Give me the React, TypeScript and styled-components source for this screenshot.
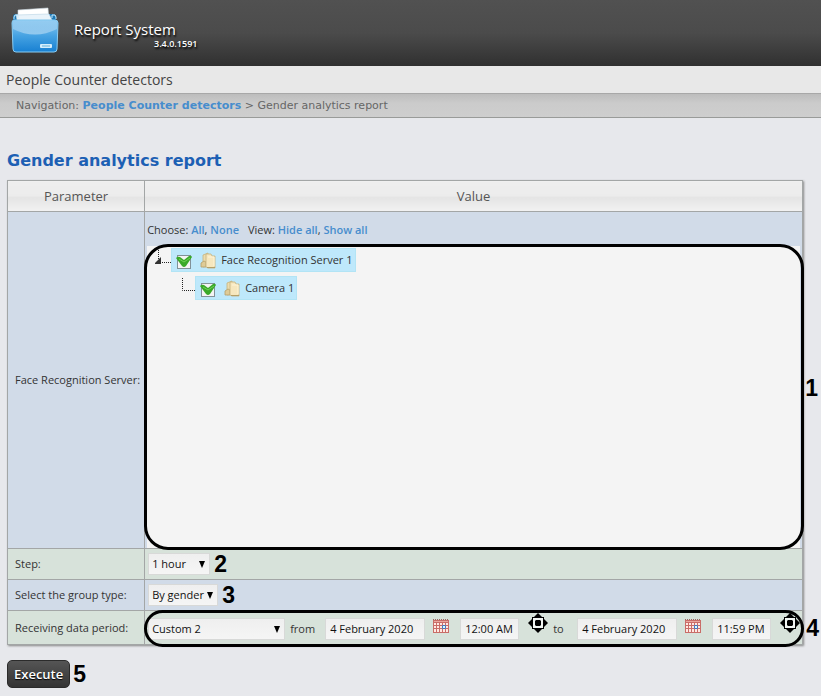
import React, { useState } from "react";
import styled, { createGlobalStyle, css } from "styled-components";

const GlobalStyle = createGlobalStyle`
  * { box-sizing: border-box; }
  body {
    margin: 0;
    background: #e7e8ec;
    color: #333;
    font-family: "Open Sans", "Noto Sans", sans-serif;
    font-size: 11px;
    line-height: 16px;
  }
`;

const Header = styled.header`
  display: flex;
  height: 66px;
  padding: 6px 10px;
  gap: 14px;
  color: #fff;
  background: linear-gradient(#515151, #4b4b4b 50%, #303030);
  text-shadow: 1px 2px 2px #000;
`;

const Brand = styled.div`
  display: flex;
  flex-direction: column;
  padding-top: 14px;
`;

const BrandName = styled.span`
  font-size: 15px;
  line-height: 18px;
`;

const Version = styled.span`
  padding-left: 80px;
  font-size: 9px;
  line-height: 12px;
  font-weight: 600;
`;

const SectionBar = styled.div`
  height: 27px;
  padding: 0 6px;
  background: #e8e8e8;
  color: #444;
  font-size: 14px;
  line-height: 28px;
`;

const Breadcrumb = styled.nav`
  height: 25px;
  padding: 0 16px;
  border-top: 1px solid #a8a8a8;
  border-bottom: 1px solid #999b99;
  background: linear-gradient(#bdbdbd, #cbcbcb 40%, #cecece);
  color: #666;
  font-family: "DejaVu Sans", sans-serif;
  font-size: 11px;
  line-height: 24px;
  white-space: pre;
`;

const Link = styled.a`
  color: #478dcd;
  font-weight: 600;
  text-decoration: none;
`;

const Main = styled.main`
  padding: 32px 18px 8px 7px;
`;

const Title = styled.h1`
  margin: 0 0 8px;
  color: #1d60b4;
  font-family: "DejaVu Sans", sans-serif;
  font-size: 16px;
  line-height: 22px;
`;

const ReportTable = styled.table`
  width: 100%;
  border-collapse: collapse;
  box-shadow: 1px 1px 2px #888;
`;

const HeadCell = styled.th`
  height: 31px;
  padding: 0;
  border: 1px solid #a3a6a6;
  background: linear-gradient(#eee, #ececec 50%, #e4e4e4 52%, #f2f2f2);
  color: #555;
  font-size: 13px;
  font-weight: 400;
`;

const Row = styled.tr<{ $green?: boolean }>`
  background: ${(p) => (p.$green ? "#d7e2da" : "#d1dbe8")};
`;

const LabelCell = styled.th`
  padding: 0 4px 0 7px;
  border: 1px solid #a3a6a6;
  font-weight: 400;
  text-align: left;
  white-space: nowrap;
`;

const ValueCell = styled.td<{ $height: number }>`
  position: relative;
  width: 100%;
  height: ${(p) => p.$height}px;
  padding: 0 2px;
  border: 1px solid #a3a6a6;
`;

const Chooser = styled.div`
  display: flex;
  height: 34px;
  padding-top: 10px;
  gap: 9px;
`;

const TreePanel = styled.div`
  position: relative;
  display: flex;
  flex-direction: column;
  gap: 4px;
  height: 302px;
  padding: 2px 8px;
  background: #f4f4f4;
`;

const TreeRow = styled.div<{ $level: number }>`
  display: flex;
  height: 24px;
  padding-left: ${(p) => p.$level * 24}px;
`;

const TreeLabel = styled.label`
  display: flex;
  align-items: center;
  padding: 0 2px 0 5px;
  gap: 5px;
  border: 1px solid #b2e4f5;
  background: #bee8fb;
`;

const CheckWrap = styled.span`
  position: relative;
  display: flex;
  margin-right: 4px;
  padding-top: 3px;
`;

const Check = styled.input`
  appearance: none;
  width: 14px;
  height: 14px;
  margin: 0;
  border: 1px solid #829198;
  background: #f4f4f4;
  & + svg { display: none; }
  &:checked + svg { display: block; }
`;

const Tick = styled.svg`
  position: absolute;
  left: 0;
  top: 3px;
  overflow: visible;
  pointer-events: none;
`;

const field = css`
  height: 22px;
  border: 1px solid #d8d9d8;
  border-radius: 0;
  background: linear-gradient(#efefef, #f5f5f5);
  color: #111;
  font: inherit;
`;

const SelectWrap = styled.span`
  position: relative;
  display: inline-flex;
`;

const SelectBox = styled.select<{ $width: number }>`
  ${field}
  appearance: none;
  width: ${(p) => p.$width}px;
  padding: 0 3px;
`;

const SelectArrow = styled.svg`
  position: absolute;
  right: 5px;
  top: 8px;
  pointer-events: none;
`;

const TextField = styled.input<{ $width: number }>`
  ${field}
  width: ${(p) => p.$width}px;
  padding: 0 4px;
`;

const ControlLine = styled.div`
  display: flex;
  align-items: center;
  gap: 4px;
  padding: 0 1px;
`;

const Period = styled.div`
  display: flex;
  align-items: center;
  height: 32px;
  padding: 2px 0 0 1px;
`;

const Word = styled.span<{ $width: number }>`
  flex: none;
  width: ${(p) => p.$width}px;
  padding-left: 5px;
`;

const IconButton = styled.button`
  display: flex;
  height: 22px;
  padding: 0 11px 0 8px;
  border: 0;
  background: none;
`;

const MoveHandle = styled.button`
  display: flex;
  height: 32px;
  padding: 0 0 0 9px;
  border: 0;
  background: none;
`;

const Ring = styled.div<{ $radius: number }>`
  position: absolute;
  inset: -2px -4px -2px -3px;
  border: 3px solid #000;
  border-radius: ${(p) => p.$radius}px;
  pointer-events: none;
`;

const PeriodRing = styled(Ring)`
  inset: -1px -2px -3px -1px;
`;

const Callout = styled.span`
  color: #000;
  font-family: "Liberation Sans", sans-serif;
  font-size: 23px;
  font-weight: 700;
  line-height: 24px;
`;

const SideCallout = styled(Callout)<{ $top: string }>`
  position: absolute;
  left: 100%;
  top: ${(p) => p.$top};
  padding-left: 5px;
`;

const PeriodCallout = styled(SideCallout)`
  padding-left: 4px;
`;

const Actions = styled.div`
  display: flex;
  align-items: center;
  gap: 3px;
  padding-top: 15px;
`;

const Execute = styled.button`
  height: 28px;
  padding: 0 6px;
  border: 1px solid #2b2b2b;
  border-radius: 5px;
  background: linear-gradient(#555, #343434);
  color: #fff;
  font: 600 13px/16px "Open Sans", sans-serif;
  text-shadow: 0 1px 1px #000;
`;

function AppLogo() {
  return (
    <svg width="50" height="48" viewBox="0 0 50 48" aria-hidden="true">
      <defs>
        <linearGradient id="case" x1="0" y1="0" x2="0" y2="1">
          <stop offset="0" stopColor="#8cc8f0" />
          <stop offset=".5" stopColor="#45a2e2" />
          <stop offset="1" stopColor="#1880d2" />
        </linearGradient>
        <linearGradient id="shine" x1="0" y1="0" x2="0" y2="1">
          <stop offset="0" stopColor="#fff" stopOpacity=".1" />
          <stop offset="1" stopColor="#fff" stopOpacity=".4" />
        </linearGradient>
      </defs>
      <path d="M3 15v-4q0-3 3-3h37q3 0 3 3v4z" fill="#1b77b4" />
      <path d="m8 4 30-2 1 13H8z" fill="#fff" stroke="#cad6df" strokeWidth=".6" />
      <path d="m6 9 33-1 3 6H7z" fill="#e9f3fa" stroke="#b9d3e4" strokeWidth=".6" />
      <path d="M4 13V11q0-3 4-2v3M46 13V11q0-3-4-2v3" fill="none" stroke="#c8edff" />
      <path d="M4 14h41q3 0 3 3l-1 26q0 3-3 3H6q-3 0-3-3L2 17q0-3 2-3z" fill="url(#case)" stroke="#8bcdf2" />
      <path d="M3 15h43q1 0 1 2v6Q25 34 3 23z" fill="url(#shine)" />
      <rect x="30" y="38" width="12" height="4" rx="1" fill="#d3edfc" />
      <path d="M32 40h8" stroke="#63afd9" />
    </svg>
  );
}

function FolderIcon() {
  return (
    <svg width="16" height="18" viewBox="0 0 16 18" aria-hidden="true">
      <path d="M3 16V4l5-2v13z" fill="#ecdcae" stroke="#c5b27e" strokeWidth=".8" />
      <path d="M1 16v-4l3-2 2 1v5z" fill="#dfcb96" stroke="#b5a069" strokeWidth=".8" />
      <path d="M6 16V3h5l1 2h3v12H8z" fill="#f6e7be" stroke="#c5b27e" strokeWidth=".8" />
      <path d="M8 6h6v9" fill="none" stroke="#fff4d6" />
      <path d="M7 16.500h8" stroke="#b5a069" />
    </svg>
  );
}

function CalendarIcon() {
  return (
    <svg width="16" height="16" viewBox="0 0 16 16" aria-hidden="true">
      <path d="M0 2h16v13H0z" fill="#c96d68" />
      <path d="M1 5h2v2H1zm3 0h2v2H4zm3 0h2v2H7zm3 0h2v2h-2zm3 0h2v2h-2zM1 8h2v2H1zm3 0h2v2H4zm3 0h2v2H7zm3 0h2v2h-2zm3 0h2v2h-2zM1 11h2v3H1zm3 0h2v3H4zm3 0h2v3H7zm3 0h2v3h-2zm3 0h2v3h-2z" fill="#ffe9e3" />
      <path d="M0 1.500h16" stroke="#9c6560" strokeDasharray="1 1" />
      <path d="M1 3.500h14" stroke="#eba69d" />
      <path d="M9.500 7.500h3v3h-3z" fill="#dff" stroke="#4677bd" />
    </svg>
  );
}

function MoveIcon() {
  return (
    <svg width="20" height="20" viewBox="0 0 20 20" aria-hidden="true">
      <path d="m10 0 10 10-10 10L0 10z" fill="#000" />
      <path d="M4 4h12v12H4z" fill="#000" />
      <path d="M5 5h10v10H5z" fill="#f1f5f2" />
      <path d="M8 7h4l1 1v4l-1 1H8l-1-1V8z" fill="#000" />
    </svg>
  );
}

function Select({ id, width, value, options }: {
  id: string; width: number; value: string; options: string[];
}) {
  return (
    <SelectWrap>
      <SelectBox id={id} $width={width} defaultValue={value}>
        {options.map((o) => <option key={o}>{o}</option>)}
      </SelectBox>
      <SelectArrow width="6" height="7" viewBox="0 0 6 7">
        <path d="M0 0h6L3 7z" fill="#000" />
      </SelectArrow>
    </SelectWrap>
  );
}

function Node({ level, name, parent }: { level: number; name: string; parent?: boolean }) {
  const [checked, setChecked] = useState(true);
  return (
    <TreeRow $level={level}>
      <svg width="16" height="24" viewBox="0 0 16 24" aria-hidden="true">
        {parent
          ? <path d="M3.500 2v10M7 14.500h9" fill="none" stroke="#222" strokeDasharray="1 1" />
          : <path d="M3.500 2v12.500H16" fill="none" stroke="#222" strokeDasharray="1 1" />}
        {parent && <path d="M6 9v7H-1z" fill="#333" />}
      </svg>
      <TreeLabel>
        <CheckWrap>
          <Check type="checkbox" checked={checked} onChange={(e) => setChecked(e.target.checked)} />
          <Tick width="14" height="14" viewBox="0 0 14 14">
            <path d="M-1 3q2-2 4-1l4 3 5-4q2-1 3 1L9 11q-2 2-4 0z" fill="#3aa929" />
            <path d="m2 4 5 3 6-4" fill="none" stroke="#6fd255" strokeWidth="1" />
          </Tick>
        </CheckWrap>
        <FolderIcon />
        {name}
      </TreeLabel>
    </TreeRow>
  );
}

function Moment({ name, time }: { name: string; time: string }) {
  return (
    <>
      <TextField $width={100} defaultValue="4 February 2020" aria-label={`${name} date`} />
      <IconButton type="button" aria-label={`Pick ${name} date`}><CalendarIcon /></IconButton>
      <TextField $width={59} defaultValue={time} aria-label={`${name} time`} />
      <MoveHandle type="button" aria-label={`Adjust ${name} time`}><MoveIcon /></MoveHandle>
    </>
  );
}

export default function App() {
  return (
    <>
      <GlobalStyle />
      <Header>
        <AppLogo />
        <Brand>
          <BrandName>Report System</BrandName>
          <Version>3.4.0.1591</Version>
        </Brand>
      </Header>
      <SectionBar>People Counter detectors</SectionBar>
      <Breadcrumb>
        Navigation: <Link href="#detectors">People Counter detectors</Link>{" > Gender analytics report"}
      </Breadcrumb>
      <Main>
        <Title>Gender analytics report</Title>
        <ReportTable>
          <thead>
            <tr>
              <HeadCell scope="col">Parameter</HeadCell>
              <HeadCell scope="col">Value</HeadCell>
            </tr>
          </thead>
          <tbody>
            <Row>
              <LabelCell scope="row">Face Recognition Server:</LabelCell>
              <ValueCell $height={337}>
                <Chooser>
                  <span>Choose: <Link href="#all">All</Link>, <Link href="#none">None</Link></span>
                  <span>View: <Link href="#hide">Hide all</Link>, <Link href="#show">Show all</Link></span>
                </Chooser>
                <TreePanel>
                  <Node level={0} name="Face Recognition Server 1" parent />
                  <Node level={1} name="Camera 1" />
                  <Ring $radius={24} />
                  <SideCallout $top="calc(50% - 21px)">1</SideCallout>
                </TreePanel>
              </ValueCell>
            </Row>
            <Row $green>
              <LabelCell scope="row"><label htmlFor="step">Step:</label></LabelCell>
              <ValueCell $height={31}>
                <ControlLine>
                  <Select id="step" width={62} value="1 hour" options={["1 hour", "1 day"]} />
                  <Callout>2</Callout>
                </ControlLine>
              </ValueCell>
            </Row>
            <Row>
              <LabelCell scope="row"><label htmlFor="group">Select the group type:</label></LabelCell>
              <ValueCell $height={31}>
                <ControlLine>
                  <Select id="group" width={70} value="By gender" options={["By gender", "By age"]} />
                  <Callout>3</Callout>
                </ControlLine>
              </ValueCell>
            </Row>
            <Row $green>
              <LabelCell scope="row"><label htmlFor="period">Receiving data period:</label></LabelCell>
              <ValueCell $height={34}>
                <Period>
                  <Select id="period" width={137} value="Custom 2" options={["Custom 1", "Custom 2"]} />
                  <Word $width={40}>from</Word>
                  <Moment name="start" time="12:00 AM" />
                  <Word $width={29}>to</Word>
                  <Moment name="end" time="11:59 PM" />
                </Period>
                <PeriodRing $radius={20} />
                <PeriodCallout $top="calc(50% - 12px)">4</PeriodCallout>
              </ValueCell>
            </Row>
          </tbody>
        </ReportTable>
        <Actions>
          <Execute type="button">Execute</Execute>
          <Callout>5</Callout>
        </Actions>
      </Main>
    </>
  );
}
